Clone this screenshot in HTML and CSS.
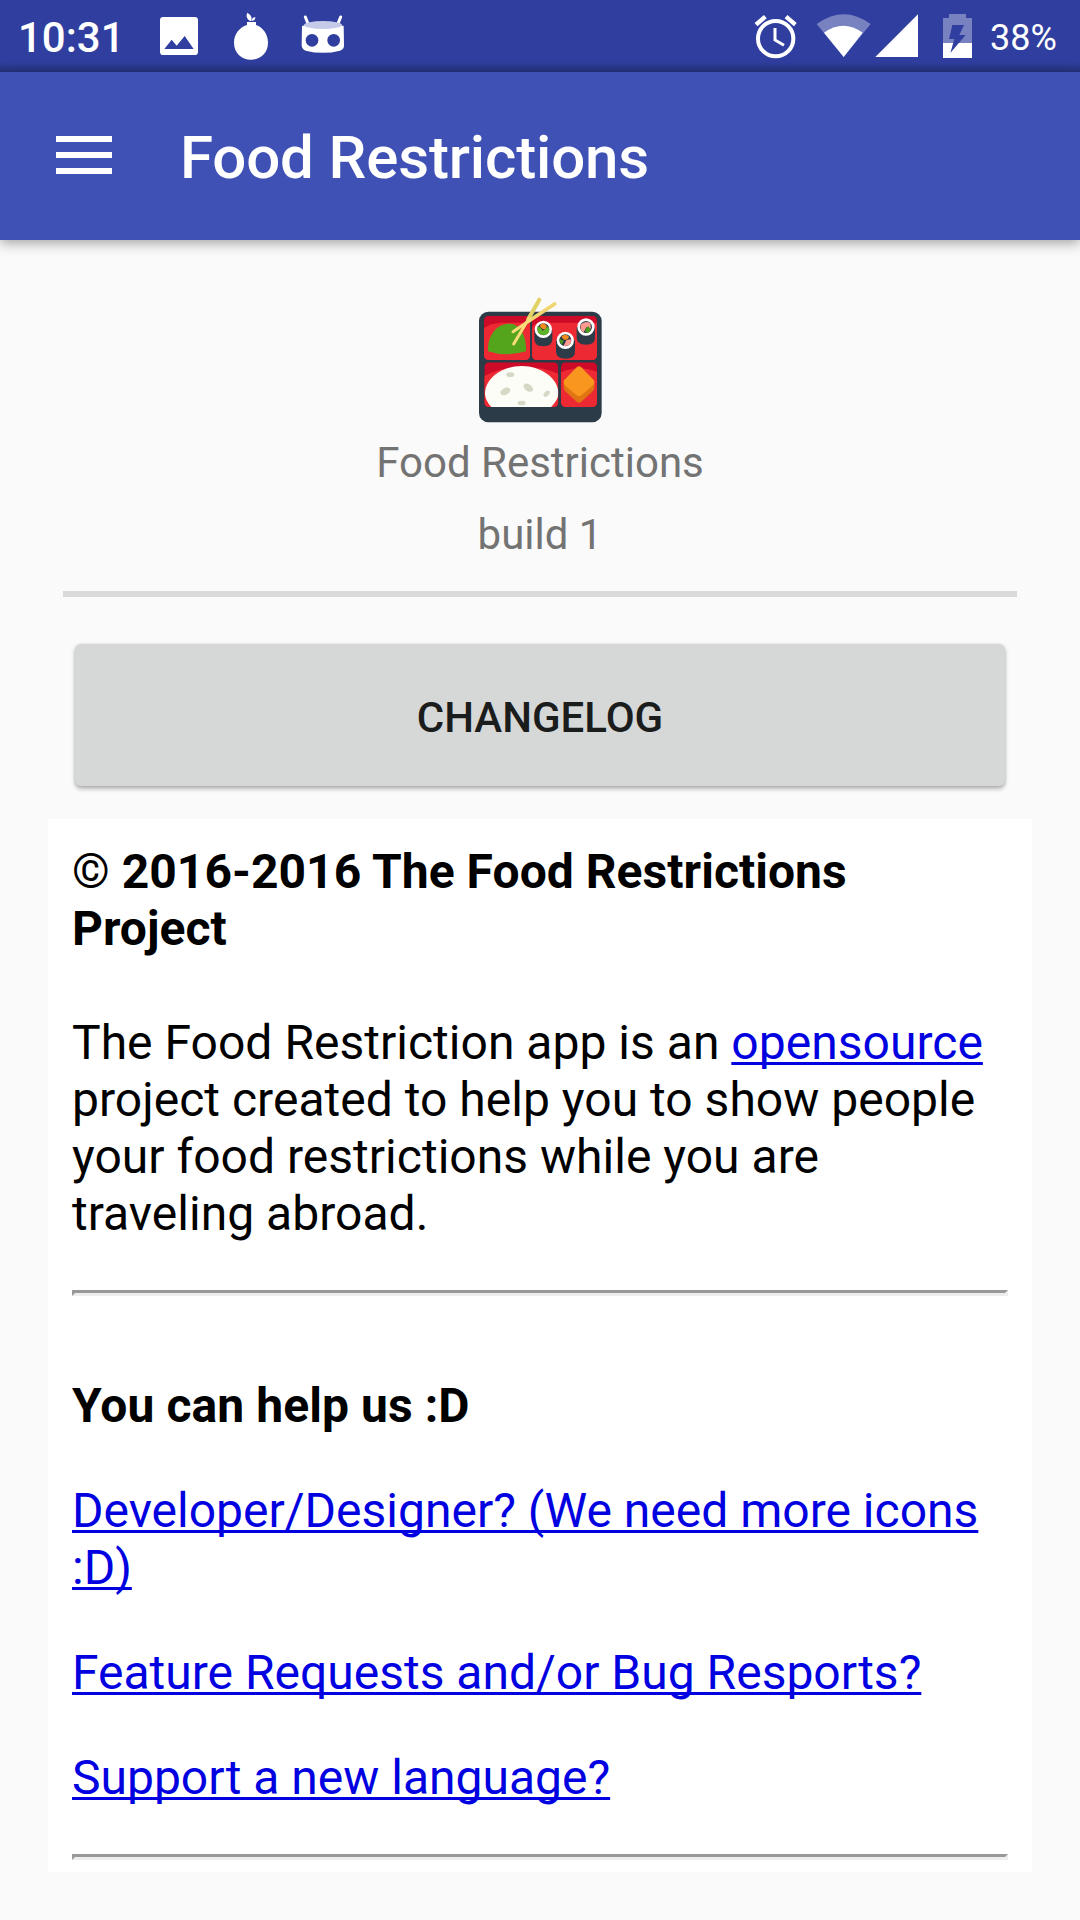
FILE: index.html
```html
<!DOCTYPE html>
<html lang="en">
<head>
<meta charset="utf-8">
<title>Food Restrictions</title>
<link rel="stylesheet" href="styles.css">
</head>
<body>
<div class="status-bar">
  <span class="clock">10:31</span>
  <svg class="notifications" width="200" height="72" viewBox="0 0 600 216">
    <path fill="#fff" fill-rule="evenodd" d="M70 51h94q10 0 10 10v94q0 10-10 10H70q-10 0-10-10V61q0-10 10-10zM73 147h88l-27-39-24 29-15-18z"/>
    <path fill="#fff" d="M321 66h27v9c21 7 36 28 36 53 0 30-22 51-51 51s-51-21-51-51c0-25 16-46 39-53z"/>
    <path fill="#fff" d="M330 63c-11-8-12-16-8-25 11 7 15 14 12 25zM336 63c-1-8 4-12 10-11 0 6-3 10-10 11z"/>
    <path stroke="#fff" stroke-width="9" stroke-linecap="round" d="M496 51l8 20M602 51l-8 20"/>
    <path fill="#fff" d="M486 78q63-19 125 0l1 57q1 13-12 17-51 13-103 0-12-4-12-17z"/>
    <ellipse cx="549" cy="75" rx="57" ry="12" fill="#c5cae9"/>
    <circle cx="516" cy="121" r="19" fill="#303f9f"/>
    <circle cx="581" cy="121" r="19" fill="#303f9f"/>
  </svg>
  <svg class="system-icons" width="240" height="72" viewBox="0 0 720 216">
    <circle cx="107" cy="116" r="53" fill="none" stroke="#fff" stroke-width="12"/>
    <path fill="none" stroke="#fff" stroke-width="9" d="M105 84v36l27 16"/>
    <path stroke="#fff" stroke-width="13" d="M48 74l28-24M166 74l-28-24"/>
    <path fill="#7982c1" d="M230 72q81-59 162 0l-81 99z"/>
    <path fill="#fff" d="M252 98q58-42 116 0l-57 73z"/>
    <path fill="#fff" d="M534 43v128H406z"/>
    <path fill="#7982c1" d="M609 54h18V42h51v12h18v75h-87z"/>
    <path fill="#fff" d="M609 129h87v45h-87z"/>
    <path fill="#303f9f" d="M637 75h35l-14 30h19l-46 54 12-42h-16z"/>
  </svg>
  <span class="battery">38%</span>
</div>
<header class="app-bar">
  <svg class="menu" width="56" height="38" viewBox="0 0 56 38"><path fill="#fff" d="M0 0h56v6H0zM0 16h56v6H0zM0 32h56v6H0z"/></svg>
  <h1 class="title">Food Restrictions</h1>
</header>
<main class="content">
  <section class="about">
    <svg class="logo" width="160" height="160" viewBox="0 0 480 480">
      <defs>
        <clipPath id="tray-a"><rect x="72" y="107" width="138" height="133" rx="14"/></clipPath>
        <clipPath id="tray-b"><rect x="216" y="107" width="195" height="133" rx="14"/></clipPath>
        <clipPath id="tray-c"><rect x="73" y="247" width="222" height="134" rx="14"/></clipPath>
        <clipPath id="tray-d"><rect x="303" y="247" width="108" height="134" rx="14"/></clipPath>
      </defs>
      <rect x="57" y="95" width="368" height="332" rx="28" fill="#2b3b47"/>
      <g clip-path="url(#tray-a)">
        <path fill="#cd0a28" d="M72 107h138v133H72z"/>
        <path fill="#ed2a33" d="M72 145q20-16 55-17h83v112H72z"/>
        <path fill="#55a51c" d="M84 214c-2-50 27-83 65-83 34 0 51 42 49 83q-60 18-114 0z"/>
      </g>
      <g clip-path="url(#tray-b)">
        <path fill="#cd0a28" d="M216 107h195v133H216z"/>
        <path fill="#ed2a33" d="M216 150q0-22 28-22h167v112H216z"/>
        <path fill="#2b3b47" d="M223 149h54v29q0 21-27 21t-27-21zM350 142h55v31q0 21-27 21t-28-21zM288 181h57v34q0 21-28 21t-29-21z"/>
      </g>
      <g stroke="#fff" stroke-width="8">
        <circle cx="250" cy="148" r="22" fill="#2b3b47"/>
        <circle cx="378" cy="141" r="22" fill="#2b3b47"/>
        <circle cx="316" cy="181" r="22" fill="#2b3b47"/>
      </g>
      <path fill="#5eb526" d="M232 139q12 3 16 14l17-14q9 22-12 27-25-1-21-27z"/>
      <path fill="#f28a1c" d="M239 138q4-9 13-8l9 9-5 9q-10 1-17-10z"/>
      <path fill="#ff9a92" d="M362 134q12-13 29-5l2 17-14-4-8 15q-11-5-9-23z"/>
      <path fill="#499d1b" d="M374 152l10-14q15 14-1 21z"/>
      <path fill="#ff9a92" d="M311 198l8-17 13-4q6 23-21 21z"/>
      <path fill="#f28a1c" d="M304 170q12-12 23 0-4 12-15 9z"/>
      <path fill="#499d1b" d="M298 176l13 6-5 11q-7-4-8-17z"/>
      <g clip-path="url(#tray-c)">
        <path fill="#cd0a28" d="M73 247h222v134H73z"/>
        <path fill="#ed2a33" d="M73 288q110-52 222-7v100H73z"/>
        <path fill="#fdfdf8" d="M75 340c0-44 50-82 110-82s110 38 110 82q0 22-28 47H100q-25-23-25-47z"/>
        <g fill="#d6d7c5">
          <ellipse cx="151" cy="284" rx="12" ry="7"/>
          <ellipse cx="136" cy="334" rx="16" ry="10" transform="rotate(-28 136 334)"/>
          <ellipse cx="205" cy="323" rx="16" ry="10" transform="rotate(35 205 323)"/>
          <ellipse cx="260" cy="341" rx="11" ry="7" transform="rotate(-45 260 341)"/>
          <ellipse cx="185" cy="369" rx="12" ry="7"/>
        </g>
      </g>
      <g clip-path="url(#tray-d)">
        <path fill="#cd0a28" d="M303 247h108v134H303z"/>
        <path fill="#ed2a33" d="M303 277q54-24 108-2v106H303z"/>
      </g>
      <path fill="#e07613" d="M311 305h92v19q0 7-8 13l-31 28q-7 6-14 0l-31-28q-8-6-8-13z"/>
      <path fill="#f9961e" d="M312 301l38-39q7-7 14 0l38 39q4 10-5 17l-33 28q-7 6-14 0l-33-28q-9-7-5-17z"/>
      <g stroke-linecap="round">
        <path stroke="#e2d266" stroke-width="12" d="M238 59L205 117"/>
        <path stroke="#f8dc78" stroke-width="9" d="M207 115l-46 77"/>
        <path stroke="#f0d670" stroke-width="11" d="M284 72L205 124"/>
        <path stroke="#f8dc78" stroke-width="9" d="M210 121L159 155"/>
      </g>
    </svg>
    <p class="app-name">Food Restrictions</p>
    <p class="build">build 1</p>
  </section>
  <hr class="divider">
  <button class="changelog" type="button">CHANGELOG</button>
  <article class="card">
    <p class="project">© <b class="heading">2016-2016 The Food Restrictions Project</b><br><br>The Food Restriction app is an <a class="link" href="#">opensource</a> project created to help you to show people your food restrictions while you are traveling abroad.</p>
    <hr class="rule">
    <h2 class="help">You can help us :D</h2>
    <p class="entry"><a class="link" href="#">Developer/Designer? (We need more icons :D)</a></p>
    <p class="entry"><a class="link" href="#">Feature Requests and/or Bug Resports?</a></p>
    <p class="entry"><a class="link" href="#">Support a new language?</a></p>
    <hr class="rule rule-last">
  </article>
</main>
</body>
</html>
```
FILE: styles.css
```css
* { box-sizing: border-box; }
body {
  margin: 0;
  width: 1080px;
  height: 1920px;
  overflow: hidden;
  background: #fafafa;
  font-family: Roboto, sans-serif;
}
p, h1, h2 { margin: 0; }
.status-bar {
  display: flex;
  height: 72px;
  background: linear-gradient(#303f9f 0 62px, #26337d 72px);
  color: #fff;
}
.clock {
  width: 140px;
  padding: 13px 0 0 18px;
  font-size: 42px;
  font-weight: 500;
  line-height: 49px;
}
.notifications { overflow: visible; }
.system-icons { margin-left: auto; }
.battery {
  width: 100px;
  padding: 17px 0 0 10px;
  font-size: 36px;
  line-height: 42px;
}
.app-bar {
  display: flex;
  align-items: flex-start;
  gap: 68px;
  height: 168px;
  padding: 49px 56px 0;
  background: #3f51b5;
  box-shadow: 0 3px 12px rgba(0, 0, 0, .36);
  color: #fff;
}
.menu { margin-top: 15px; }
.title {
  padding-top: 1px;
  font-size: 60px;
  font-weight: 500;
  letter-spacing: -.14px;
  line-height: 72px;
}
.content { padding: 40px 48px 0; }
.about {
  display: flex;
  flex-direction: column;
  align-items: center;
  height: 311px;
  color: #737373;
  font-size: 42px;
  line-height: 50px;
}
.logo { margin-bottom: -2px; }
.build { margin-top: 22px; }
.divider {
  height: 6px;
  margin: 0 15px;
  border: 0;
  background: #dadada;
}
.changelog {
  display: block;
  width: 930px;
  height: 142px;
  margin: 47px 27px 33px;
  padding: 5px 0 0;
  border: 0;
  border-radius: 6px;
  background: #d6d8d7;
  box-shadow: 0 3px 4px rgba(0, 0, 0, .27), 0 0 3px rgba(0, 0, 0, .12);
  color: #1b1c1c;
  font: 500 42px/50px Roboto, sans-serif;
}
.card {
  height: 1053px;
  padding: 24px;
  background: #fff;
  color: #000;
  font-size: 48px;
  line-height: 57px;
}
.project { letter-spacing: .02px; }
.heading { letter-spacing: .04px; }
.link {
  color: #0000e0;
  text-decoration: underline 3px;
  text-decoration-skip-ink: none;
  text-underline-offset: 3px;
}
.rule {
  height: 6px;
  margin: 48px 0 81px;
  border: 3px solid;
  border-color: #999 #eee #eee #999;
}
.rule-last { margin-bottom: 0; }
.help {
  font-size: 48px;
  font-weight: 700;
  letter-spacing: .07px;
}
.entry { margin-top: 48px; }
```
